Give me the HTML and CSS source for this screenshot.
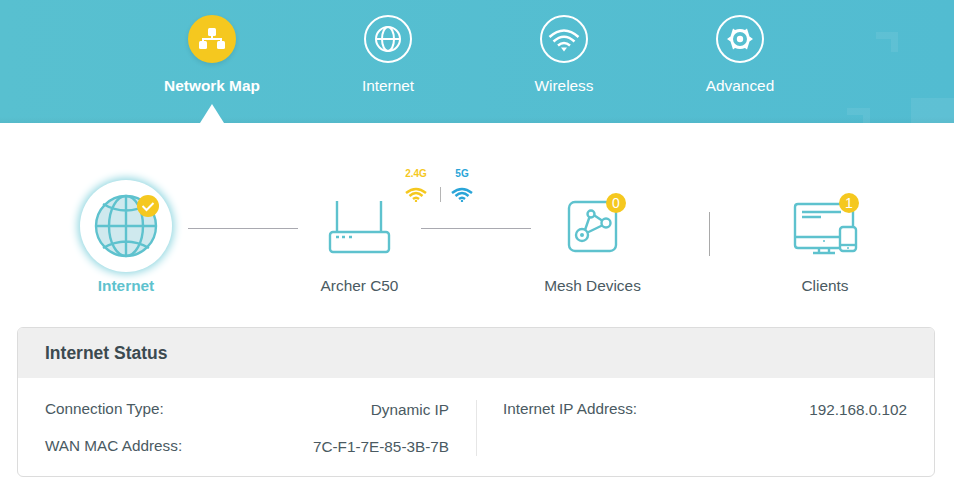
FILE: index.html
```html
<!DOCTYPE html>
<html lang="en">
<head>
    <meta charset="UTF-8">
    <meta name="viewport" content="width=device-width, initial-scale=1.0">
    <title>Network Map</title>
    <link rel="stylesheet" href="styles.css">
</head>
<body>

<header class="top">
    <svg class="top-deco" viewBox="0 0 954 123" aria-hidden="true">
        <path d="M876 32H898V52H891V39H876Z"/>
        <path d="M847 108H870V123H863V115H847Z"/>
        <rect x="911" y="98" width="43" height="25"/>
    </svg>
    <nav class="nav">
        <a class="nav-item active">
            <span class="nav-icon">
                <svg viewBox="0 0 48 48">
                    <rect class="solid" x="20" y="13" width="8" height="8" rx="1.500"/>
                    <rect class="solid" x="11" y="26" width="8" height="8" rx="1.500"/>
                    <rect class="solid" x="29" y="26" width="8" height="8" rx="1.500"/>
                    <path class="line" d="M24 20V24M15 27V24H33V27"/>
                </svg>
            </span>
            <span class="nav-label">Network Map</span>
        </a>
        <a class="nav-item">
            <span class="nav-icon">
                <svg viewBox="0 0 48 48">
                    <circle class="line" cx="24" cy="24" r="12"/>
                    <ellipse class="line" cx="24" cy="24" rx="6" ry="12"/>
                    <path class="line" d="M12 24H36"/>
                </svg>
            </span>
            <span class="nav-label">Internet</span>
        </a>
        <a class="nav-item">
            <span class="nav-icon">
                <svg viewBox="0 0 48 48">
                    <path class="line wide" d="M9.500 22Q24 9 38.500 22M13.500 26.500Q24 17 34.500 26.500M18 30.500Q24 25.500 30 30.500"/>
                    <path class="solid" d="M21 32.500H27L24 36.500Z"/>
                </svg>
            </span>
            <span class="nav-label">Wireless</span>
        </a>
        <a class="nav-item">
            <span class="nav-icon">
                <svg viewBox="0 0 48 48">
                    <path class="solid" d="M11 24L14.500 21.500L17 13.500L19 15Q24 13 29 15L31 13.500L33.500 21.500L37 24L33.500 26.500L31 34.500L29 33Q24 35 19 33L17 34.500L14.500 26.500Z"/>
                    <circle class="hole" cx="24" cy="24" r="7"/>
                    <circle class="solid" cx="24" cy="24" r="3.200"/>
                </svg>
            </span>
            <span class="nav-label">Advanced</span>
        </a>
    </nav>
</header>

<main class="page">
    <section class="map">
        <div class="node node-internet">
            <div class="node-icon">
                <span class="glow"></span>
                <svg viewBox="76 176 100 100">
                    <circle class="fill" cx="126" cy="226" r="30"/>
                    <ellipse class="stroke" cx="126" cy="226" rx="17" ry="30"/>
                    <path class="stroke" d="M126 196V256M96 226H156M103 204Q126 217 149 204M103 248Q126 235 149 248"/>
                    <circle class="badge" cx="148" cy="206" r="11"/>
                    <path class="tick" d="M142.500 206L146.500 210L153.500 203"/>
                </svg>
            </div>
            <div class="node-label">Internet</div>
        </div>
        <div class="link"></div>
        <div class="node node-router">
            <div class="node-icon">
                <svg viewBox="309 176 100 100">
                    <path class="stroke" d="M337 201V232M381 201V232"/>
                    <rect class="stroke" x="330" y="232" width="59" height="20" rx="3"/>
                    <path class="dots" d="M336 237H339M342 237H345M349 237H352"/>
                </svg>
            </div>
            <div class="node-label">Archer C50</div>
            <div class="bands">
                <div class="band band-24">
                    <span>2.4G</span>
                    <svg viewBox="0 0 22 16">
                        <path d="M1 7Q11 -1 21 7M4.500 10Q11 4 17.500 10M8 13Q11 10.500 14 13"/>
                        <circle cx="11" cy="15" r="1.200"/>
                    </svg>
                </div>
                <div class="band-sep"></div>
                <div class="band band-5">
                    <span>5G</span>
                    <svg viewBox="0 0 22 16">
                        <path d="M1 7Q11 -1 21 7M4.500 10Q11 4 17.500 10M8 13Q11 10.500 14 13"/>
                        <circle cx="11" cy="15" r="1.200"/>
                    </svg>
                </div>
            </div>
        </div>
        <div class="link"></div>
        <div class="node node-mesh">
            <div class="node-icon">
                <svg viewBox="542 176 100 100">
                    <rect class="stroke" x="569" y="202" width="47" height="49" rx="6"/>
                    <circle class="stroke" cx="582" cy="235" r="6"/>
                    <circle class="dot" cx="582" cy="235" r="2"/>
                    <circle class="stroke" cx="591" cy="214" r="3.500"/>
                    <circle class="stroke" cx="606" cy="223" r="4.500"/>
                    <path class="stroke" d="M585 230L589.500 217M594.500 215.500L602 220.500M602 225.500L587.500 232.500"/>
                </svg>
                <span class="count count-mesh">0</span>
            </div>
            <div class="node-label">Mesh Devices</div>
        </div>
        <div class="split"></div>
        <div class="node node-clients">
            <div class="node-icon">
                <svg viewBox="775 176 100 100">
                    <path class="stroke" d="M853 227V204H798Q795 204 795 207V245Q795 248 798 248H840M795 237H840M819 248V253M829 248V253M813 253H835M802 212H841M802 217H821"/>
                    <rect class="stroke" x="840" y="227" width="16" height="24" rx="3"/>
                    <path class="stroke" d="M840 245H856"/>
                    <circle class="dot" cx="824" cy="241" r="1"/>
                    <circle class="dot" cx="848" cy="248" r="1"/>
                </svg>
                <span class="count count-clients">1</span>
            </div>
            <div class="node-label">Clients</div>
        </div>
    </section>

    <section class="card">
        <h2 class="card-title">Internet Status</h2>
        <div class="card-body">
            <div class="col">
                <div class="row"><span>Connection Type:</span><span class="value">Dynamic IP</span></div>
                <div class="row"><span>WAN MAC Address:</span><span class="value">7C-F1-7E-85-3B-7B</span></div>
            </div>
            <div class="col col-right">
                <div class="row"><span>Internet IP Address:</span><span class="value">192.168.0.102</span></div>
            </div>
        </div>
    </section>
</main>

</body>
</html>
```

FILE: styles.css
```css
* {
    box-sizing: border-box;
}
body {
    margin: 0;
    background-color: white;
    font-family: "Liberation Sans", Arial, sans-serif;
    color: #4a5a62;
}
.top {
    position: relative;
    height: 123px;
    background: linear-gradient(180deg, rgba(0, 0, 0, 0) 95%, rgba(0, 0, 0, 0.03)), linear-gradient(90deg, #58c0d0, #52bcd1);
    overflow: hidden;
}
.top-deco {
    position: absolute;
    top: 0;
    left: 0;
    width: 954px;
    height: 123px;
    fill: rgba(255, 255, 255, 0.07);
}
.nav {
    position: relative;
    display: flex;
    padding: 15px 0 0 124px;
}
.nav-item {
    position: relative;
    width: 176px;
    height: 108px;
    display: flex;
    flex-direction: column;
    align-items: center;
    color: white;
}
.nav-icon {
    width: 48px;
    height: 48px;
    border: 2px solid white;
    border-radius: 50%;
    display: flex;
}
.nav-icon svg {
    width: 48px;
    height: 48px;
    margin: -2px;
    flex: none;
}
.nav-icon .line {
    fill: none;
    stroke: white;
    stroke-width: 2;
}
.nav-icon .wide {
    stroke-width: 2.500;
}
.nav-icon .solid {
    fill: white;
}
.nav-icon .hole {
    fill: #56bfd0;
}
.nav-label {
    margin-top: 14px;
    font-size: 15.400px;
    line-height: 18px;
    white-space: nowrap;
}
.active .nav-icon {
    background-color: #f5c81f;
    border-color: #f5c81f;
    box-shadow: 0 2px 5px rgba(0, 0, 0, 0.1);
}
.active .nav-label {
    font-weight: bold;
}
.active::after {
    content: "";
    position: absolute;
    bottom: 0;
    left: 76px;
    border-left: 12px solid transparent;
    border-right: 12px solid transparent;
    border-bottom: 19px solid white;
}
.page {
    padding: 53px 19px 10px 17px;
}
.map {
    display: flex;
    padding-left: 59px;
}
.node {
    position: relative;
    flex: none;
}
.node-internet {
    width: 100px;
    margin-right: 12px;
}
.node-router,
.node-mesh {
    width: 123px;
}
.node-clients {
    width: 120px;
    margin-left: 55px;
}
.node-icon {
    position: relative;
    width: 100px;
    height: 100px;
}
.node-router .node-icon,
.node-mesh .node-icon {
    margin-left: 11px;
}
.node-clients .node-icon {
    margin-left: 10px;
}
.node-icon svg {
    position: relative;
    display: block;
    width: 100px;
    height: 100px;
}
.node-icon .stroke {
    fill: none;
    stroke: #5ec2ce;
    stroke-width: 2.400;
}
.node-icon .fill {
    fill: #cfe9ee;
    stroke: #5ec2ce;
    stroke-width: 2.400;
}
.node-icon .dot {
    fill: #5ec2ce;
}
.node-icon .dots {
    fill: none;
    stroke: #5ec2ce;
    stroke-width: 2.500;
}
.node-icon .badge {
    fill: #f5c81f;
}
.node-icon .tick {
    fill: none;
    stroke: white;
    stroke-width: 2;
}
.glow {
    position: absolute;
    top: 4px;
    left: 4px;
    width: 92px;
    height: 92px;
    border-radius: 50%;
    background-color: white;
    box-shadow: 0 0 9px 2px #8fd6e0;
}
.node-label {
    text-align: center;
    font-size: 15.400px;
    line-height: 18px;
    margin-top: 1px;
    white-space: nowrap;
}
.node-internet .node-label {
    color: #5ec2ce;
    font-weight: bold;
}
.link {
    flex: none;
    width: 110px;
    height: 1px;
    margin-top: 52px;
    background-color: #a9a9b0;
}
.split {
    flex: none;
    width: 1px;
    height: 44px;
    margin: 36px 0 0 55px;
    background-color: #a9a9a9;
}
.bands {
    position: absolute;
    top: -8px;
    left: 107px;
    display: flex;
    align-items: flex-end;
}
.band {
    width: 22px;
    display: flex;
    flex-direction: column;
    align-items: center;
    font-size: 10px;
    font-weight: bold;
    line-height: 12px;
}
.band span {
    margin-bottom: 6px;
    white-space: nowrap;
}
.band svg {
    display: block;
    width: 22px;
    height: 16px;
    fill: currentColor;
}
.band svg path {
    fill: none;
    stroke: currentColor;
    stroke-width: 2.400;
}
.band-24 {
    color: #f5c81f;
}
.band-5 {
    color: #2aa5d8;
}
.band-sep {
    width: 1px;
    height: 15px;
    margin: 0 10px 0 13px;
    background-color: #b5b5b5;
}
.count {
    position: absolute;
    width: 20px;
    height: 20px;
    border-radius: 50%;
    background-color: #f5c81f;
    color: white;
    font-size: 14px;
    line-height: 20px;
    text-align: center;
}
.count-mesh {
    top: 17px;
    left: 64px;
}
.count-clients {
    top: 17px;
    left: 64px;
}
.card {
    width: 918px;
    height: 150px;
    margin-top: 32px;
    border: 1px solid #dcdcdc;
    border-radius: 6px;
    overflow: hidden;
}
.card-title {
    margin: 0;
    height: 50px;
    padding-left: 27px;
    background-color: #efefef;
    color: #3c4a50;
    font-size: 17.500px;
    line-height: 51px;
}
.card-body {
    display: flex;
    padding: 22px 27px 0;
    font-size: 15.300px;
    line-height: 18px;
}
.col {
    width: 404px;
    display: flex;
    flex-direction: column;
    gap: 18px;
    min-height: 56px;
}
.col-right {
    width: 431px;
    margin-left: 27px;
    padding-left: 26px;
    border-left: 1px solid #e6e6e6;
}
.row {
    display: flex;
    justify-content: space-between;
}
.value {
    padding-top: 1px;
}
```
